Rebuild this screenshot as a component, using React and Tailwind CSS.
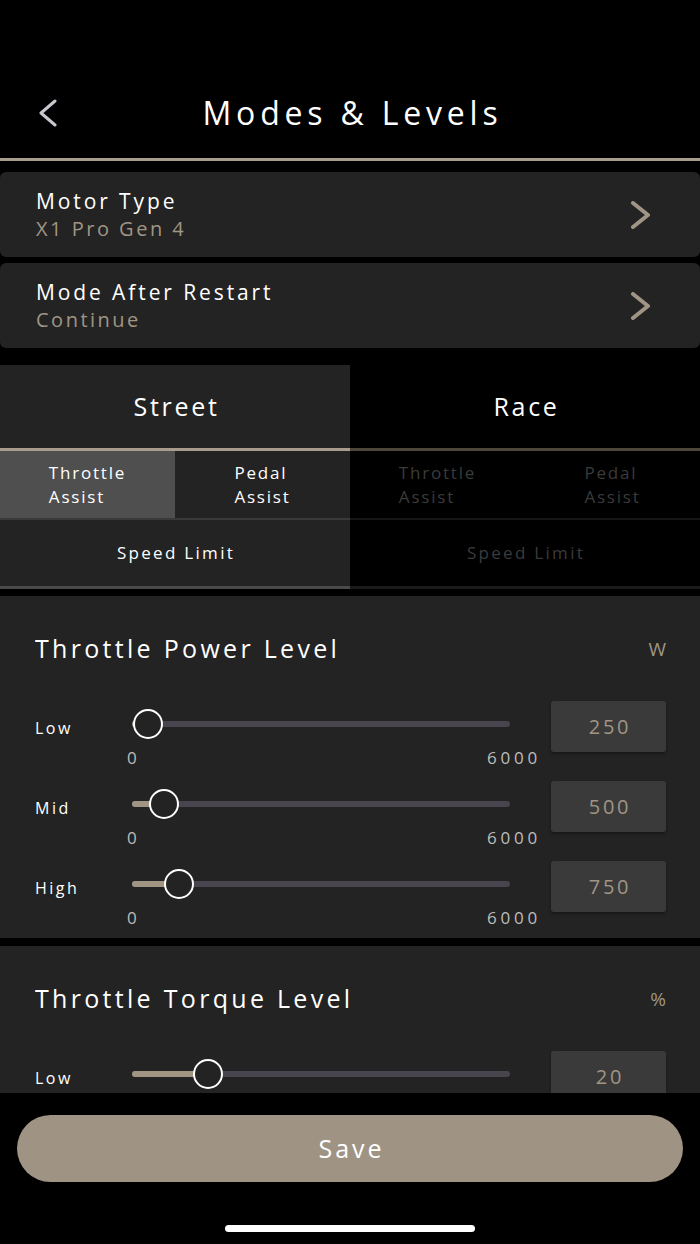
const panels = [
    {
        title: "Throttle Power Level",
        unit: "W",
        rows: [
            { label: "Low", value: 250, max: 6000 },
            { label: "Mid", value: 500, max: 6000 },
            { label: "High", value: 750, max: 6000 },
        ],
    },
    {
        title: "Throttle Torque Level",
        unit: "%",
        rows: [
            { label: "Low", value: 20, max: 100 },
            { label: "Mid", value: 50, max: 100 },
            { label: "High", value: 100, max: 100 },
        ],
    },
];

function Chevron({ className, left }) {
    return (
        <svg width="22" height="28" viewBox="0 0 22 28" fill="none" className={className}>
            <polyline
                points={left ? "18,2 4,14 18,26" : "3,2 18,14 3,26"}
                stroke="currentColor"
                strokeWidth={left ? 3 : 4}
                strokeLinecap="round"
                strokeLinejoin="round"
            />
        </svg>
    );
}

function SettingCard({ title, value }) {
    return (
        <div className="flex h-[85px] items-center justify-between rounded-[6px] bg-[#232323] pl-[36px] pr-[48px]">
            <div className="flex flex-col">
                <span className="text-[21px] leading-[28px] tracking-[2.9px] text-white">{title}</span>
                <span className="text-[20px] leading-[28px] tracking-[2.5px] text-[#a09584]">{value}</span>
            </div>
            <Chevron className="text-[#a09584]" />
        </div>
    );
}

function SliderRow({ label, value, max }) {
    const trackW = 378;
    const pos = (value / max) * trackW;

    return (
        <div className="flex flex-col">
            <div className="flex h-[51px] items-center">
                <span className="w-[97px] pt-[3px] text-[16px] tracking-[2.5px] text-white">{label}</span>
                <div className="relative mb-[5px] h-[6px] w-[378px] rounded-full bg-[#48454f]">
                    <div className="absolute left-0 top-0 h-full rounded-full bg-[#a09483]" style={{ width: pos }} />
                    <div
                        className="absolute top-[-12px] h-[30px] w-[30px] rounded-full border-2 border-white bg-[#232323]"
                        style={{ left: pos - 15 }}
                    />
                </div>
                <div className="ml-[41px] flex h-[51px] w-[115px] items-center justify-center rounded-[3px] bg-[#3a3a3a] pl-[3px] text-[20px] tracking-[2.8px] text-[#a09584] shadow-[0_2px_3px_rgba(0,0,0,0.35)]">
                    {value}
                </div>
            </div>
            <div className="-mt-[3px] ml-[92px] flex h-[18px] w-[414px] items-center justify-between text-[17px] tracking-[3.8px] text-[#bdbdbd]">
                <span>0</span>
                <span>{max}</span>
            </div>
        </div>
    );
}

function LevelPanel({ title, unit, rows }) {
    return (
        <div className="bg-[#232323] pb-[11px] pl-[35px] pr-[34px] pt-[37px]">
            <div className="flex h-[32px] items-center justify-between">
                <span className="text-[25px] tracking-[3.3px] text-white">{title}</span>
                <span className="text-[19px] text-[#a09584]">{unit}</span>
            </div>
            <div className="mt-[36px] flex flex-col gap-[14px]">
                {rows.map((r) => (
                    <SliderRow key={r.label} {...r} />
                ))}
            </div>
        </div>
    );
}

function SubTabs({ active, dim }) {
    const text = dim ? "text-[#3b3b3b]" : "text-white";
    return (
        <div className={`grid h-[67px] grid-cols-2 text-[17px] leading-[24px] tracking-[1.8px] ${text}`}>
            <div className={`flex items-center justify-center ${active ? "bg-[#4f4f4f]" : ""}`}>
                <div>Throttle<br />Assist</div>
            </div>
            <div className="flex items-center justify-center">
                <div>Pedal<br />Assist</div>
            </div>
        </div>
    );
}

export default function App() {
    return (
        <div className="flex h-[1244px] w-[700px] flex-col overflow-hidden bg-black font-['Open_Sans','Noto_Sans',sans-serif]">
            {/* header */}
            <div className="relative flex h-[158px] shrink-0 items-center justify-center pt-[68px]">
                <Chevron left className="absolute left-[37px] top-[99px] text-[#c9c6cf]" />
                <h1 className="pl-[5px] text-[32px] tracking-[4.8px] text-white">Modes &amp; Levels</h1>
            </div>
            <div className="h-[3px] shrink-0 bg-[#a89c8c]" />

            <div className="flex min-h-0 flex-1 flex-col overflow-hidden">
                <div className="mt-[11px] flex flex-col gap-[6px]">
                    <SettingCard title="Motor Type" value="X1 Pro Gen 4" />
                    <SettingCard title="Mode After Restart" value="Continue" />
                </div>

                {/* mode tabs */}
                <div className="mt-[17px] grid grid-cols-2">
                    <div className="flex flex-col bg-[#232323]">
                        <div className="flex h-[83px] items-center justify-center pl-[3px] text-[25px] tracking-[2.7px] text-white">Street</div>
                        <div className="h-[3px] bg-[#a89c8c]" />
                        <SubTabs active />
                        <div className="h-[2px] bg-[#3a3a3a]" />
                        <div className="flex h-[66px] items-center justify-center pl-[2px] text-[17px] tracking-[2.3px] text-white">Speed Limit</div>
                        <div className="h-[3px] bg-[#4a4a4a]" />
                    </div>
                    <div className="flex flex-col bg-black">
                        <div className="flex h-[83px] items-center justify-center pl-[3px] text-[25px] tracking-[2.7px] text-white">Race</div>
                        <div className="h-[3px] bg-[#4d463d]" />
                        <SubTabs dim />
                        <div className="h-[2px] bg-[#161616]" />
                        <div className="flex h-[66px] items-center justify-center pl-[2px] text-[17px] tracking-[2.3px] text-[#3b3b3b]">Speed Limit</div>
                        <div className="h-[3px] bg-[#1a1a1a]" />
                    </div>
                </div>

                <div className="mt-[7px] flex flex-col gap-[8px]">
                    {panels.map((p) => (
                        <LevelPanel key={p.title} {...p} />
                    ))}
                </div>
            </div>

            {/* footer */}
            <div className="flex h-[151px] shrink-0 flex-col items-center bg-black pt-[22px]">
                <button className="flex h-[67px] w-[666px] items-center justify-center rounded-full bg-[#9f9384] pl-[3px] text-[25px] tracking-[3px] text-white">
                    Save
                </button>
                <div className="mt-[43px] h-[7px] w-[250px] rounded-full bg-white" />
            </div>
        </div>
    );
}
